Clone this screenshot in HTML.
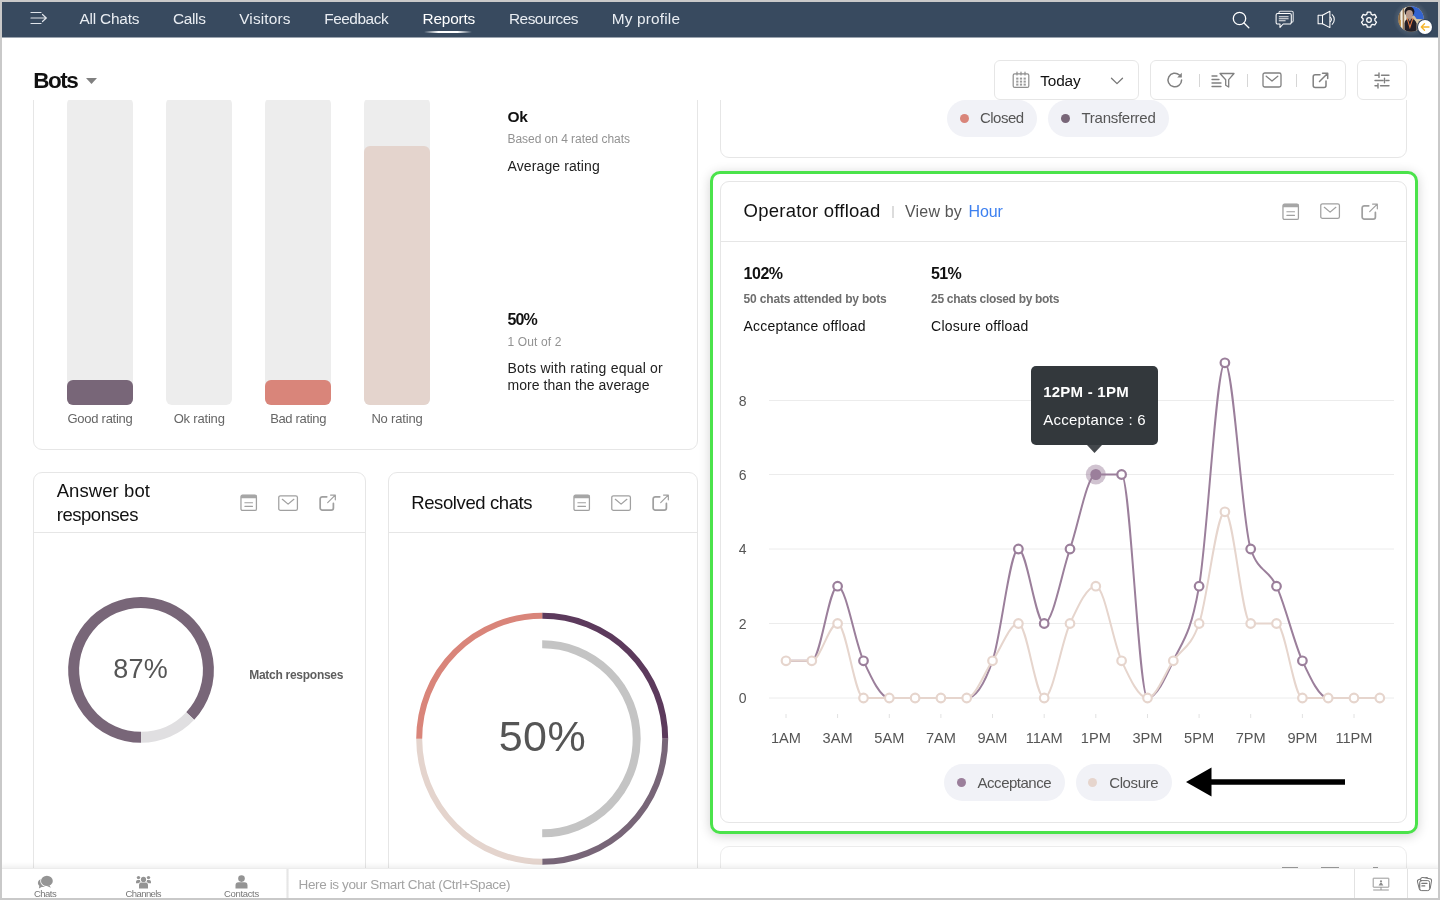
<!DOCTYPE html>
<html lang="en">
<head>
<meta charset="utf-8">
<title>Bots - Reports</title>
<style>
*{box-sizing:border-box;margin:0;padding:0}
html,body{width:1440px;height:900px;overflow:hidden;background:#fff}
body{font-family:"Liberation Sans",sans-serif;color:#111;position:relative}
.abs{position:absolute}
.t{position:absolute;white-space:nowrap;line-height:1}
.c{transform:translateX(-50%)}
svg{position:absolute;overflow:visible}
.ico{fill:none;stroke:#a0a0a0;stroke-width:1.3;stroke-linecap:round;stroke-linejoin:round}
.card{position:absolute;border:1px solid #e6e6e6;border-radius:9px;background:#fff}
.hline{position:absolute;height:1px;background:#e6e6e6}
.pill{position:absolute;height:36px;border-radius:19px;background:#f1f2f7}
.pill i{position:absolute;left:14px;top:13px;width:9px;height:9px;border-radius:50%}
.pill span{position:absolute;left:33px;top:10px;font-size:15px;line-height:1;color:#555;white-space:nowrap}
.bar{position:absolute;width:66px;background:#ededed;border-radius:6px;top:98px;height:307px}
.bar b{position:absolute;left:0;right:0;bottom:0;border-radius:6px}
.nav{font-size:15.5px;color:#e9edf2;top:11px;letter-spacing:-0.35px}
</style>
</head>
<body>
<div id="root" style="position:absolute;left:0;top:0;width:1440px;height:900px;will-change:transform">
<!-- top navigation -->
<div class="abs" style="left:0;top:0;width:1440px;height:37px;background:#384a5f"></div>
<div class="abs" style="left:0;top:37px;width:1440px;height:1px;background:rgba(56,74,95,0.5)"></div>
<svg style="left:30px;top:11px" width="18" height="14" viewBox="0 0 18 14"><g fill="none" stroke="#dfe4ea" stroke-width="1.2" stroke-linecap="round"><path d="M1 1.5h10M1 7h15M1 12.5h10M12.5 3.5L16.3 7l-3.8 3.5"/></g></svg>
<div class="t" style="left:79.50px;top:10px;font-size:15.4px;line-height:17px;color:#e9edf2;letter-spacing:-0.201px">All Chats</div>
<div class="t" style="left:173.00px;top:10px;font-size:15.4px;line-height:17px;color:#e9edf2;letter-spacing:-0.345px">Calls</div>
<div class="t" style="left:239.20px;top:10px;font-size:15.4px;line-height:17px;color:#e9edf2;letter-spacing:0.162px">Visitors</div>
<div class="t" style="left:324.20px;top:10px;font-size:15.4px;line-height:17px;color:#e9edf2;letter-spacing:-0.452px">Feedback</div>
<div class="t" style="left:422.50px;top:10px;font-size:15.4px;line-height:17px;color:#fff;letter-spacing:-0.202px">Reports</div>
<div class="t" style="left:509.00px;top:10px;font-size:15.4px;line-height:17px;color:#e9edf2;letter-spacing:-0.511px">Resources</div>
<div class="t" style="left:611.70px;top:10px;font-size:15.4px;line-height:17px;color:#e9edf2;letter-spacing:0.176px">My profile</div>
<div class="abs" style="left:424px;top:31px;width:48px;height:2px;border-radius:1px;background:linear-gradient(90deg,rgba(255,255,255,0),#fff 30%,#fff 70%,rgba(255,255,255,0))"></div>
<!-- nav right icons -->
<svg style="left:1231px;top:10px" width="20" height="20" viewBox="0 0 20 20"><g fill="none" stroke="#fff" stroke-width="1.3" stroke-linecap="round"><circle cx="8.5" cy="8.5" r="6.2"/><path d="M13 13l4.8 4.8"/></g></svg>
<svg style="left:1274.600px;top:10px" width="20" height="20" viewBox="0 0 20 20"><g fill="none" stroke="#fff" stroke-width="1.05" stroke-linejoin="round" stroke-linecap="round"><path d="M4 3.300V2.600a1.400 1.400 0 0 1 1.400-1.400H16.800a1.400 1.400 0 0 1 1.400 1.400v8.200a1.400 1.400 0 0 1-1.400 1.400h-.600" opacity="0.85"/><path d="M2.600 3.400h12.200a1.500 1.500 0 0 1 1.500 1.500v7.600a1.500 1.500 0 0 1-1.500 1.500H8.200L5 17.400V14H2.600a1.500 1.500 0 0 1-1.500-1.500V4.900a1.500 1.500 0 0 1 1.500-1.500z"/><path d="M4.200 6.800h9M4.200 8.800h9M4.200 10.800h6" opacity="0.9"/></g></svg>
<svg style="left:1316px;top:9px" width="22" height="20" viewBox="0 0 22 20"><g fill="none" stroke="#fff" stroke-width="1.05" stroke-linejoin="round" stroke-linecap="round"><path d="M2.100 6.300h4.400v8.400H2.100z"/><path d="M6.500 6.300L13.900 2.300v16.300L6.500 14.700"/><path d="M14.300 8.400a2.500 2.500 0 0 1 0 4.200M16.200 5.700a6.600 6.600 0 0 1 0 9.600"/></g></svg>
<svg style="left:1359px;top:10px" width="20" height="20" viewBox="0 0 20 20"><g fill="none" stroke="#fff" stroke-width="1.3" stroke-linejoin="round"><circle cx="10" cy="10" r="2.3"/><path d="M8.3 2.2h3.4l.5 2.1 1.5.8 2.1-.7 1.7 2.9-1.6 1.5v1.8l1.6 1.5-1.7 2.9-2.1-.7-1.5.8-.5 2.1H8.3l-.5-2.1-1.5-.8-2.1.7-1.7-2.9 1.6-1.5V8.8L2.5 7.3l1.7-2.9 2.1.7 1.5-.8z"/></g></svg>
<div class="abs" style="left:1392.8px;top:0.500px;width:36px;height:36px;border-radius:50%;background:radial-gradient(circle,rgba(255,255,255,0.15) 40%,rgba(255,255,255,0) 70%)"></div>
<svg style="left:1397.8px;top:5.500px" width="26" height="26" viewBox="0 0 26 26"><defs><clipPath id="avc"><circle cx="13" cy="13" r="12.8"/></clipPath></defs>
<g clip-path="url(#avc)"><rect width="26" height="26" fill="#cdbb9d"/>
<rect x="0" y="0" width="2.500" height="26" fill="#8a6a45"/><rect x="2.500" y="0" width="2.200" height="26" fill="#f1ece2"/><rect x="4.700" y="0" width="1.600" height="26" fill="#9a7c58"/><rect x="6.300" y="0" width="1.800" height="26" fill="#ece4d6"/>
<rect x="1.500" y="14" width="1.500" height="12" fill="#c99a4e"/>
<path d="M12.500 0H26V13.600L19 13.400 16.500 10 13 9z" fill="#3363cf"/>
<path d="M17 13l9 .500V26H17z" fill="#d8c7a4"/>
<ellipse cx="11.500" cy="5.600" rx="4.900" ry="5.200" fill="#1f1a20"/>
<ellipse cx="11.400" cy="8.200" rx="3.500" ry="4.200" fill="#b8998a"/>
<path d="M6.500 26V17.500Q6.800 13.200 11.500 12.200 17.500 12.600 18.600 17.500V26z" fill="#221e26"/>
<path d="M9.100 12.200L11.900 21.500 15 11.800" fill="none" stroke="#df7a45" stroke-width="1.100"/>
<path d="M10 12.300l1.800 3.200 1.800-3.400z" fill="#b8998a"/>
</g></svg>
<div class="abs" style="left:1416.500px;top:19px;width:16.600px;height:16.600px;border-radius:50%;background:#32435a"></div>
<div class="abs" style="left:1417.600px;top:20.400px;width:14px;height:14px;border-radius:50%;background:#fff"></div>
<svg style="left:1419.600px;top:22.400px" width="10" height="10" viewBox="0 0 10 10"><path d="M9 5H1.5M4.5 1.8L1.3 5l3.2 3.2" fill="none" stroke="#f5b52c" stroke-width="1.35" stroke-linecap="round" stroke-linejoin="round"/></svg>
<!-- title + toolbar -->
<div class="t" style="left:33.20px;top:68px;font-size:22.5px;line-height:25px;color:#111;font-weight:bold;letter-spacing:-1.449px">Bots</div>
<svg style="left:86px;top:78px" width="11" height="6" viewBox="0 0 11 6"><path d="M0 0h11L5.5 6z" fill="#808080"/></svg>

<div class="abs" style="left:994px;top:60px;width:145px;height:40px;border:1px solid #e6e6e6;border-radius:6px;background:#fff"></div>
<svg style="left:1012px;top:71px" width="18" height="18" viewBox="0 0 18 18"><g fill="none" stroke="#8e8e8e" stroke-width="1.2" stroke-linecap="round"><rect x="1.2" y="2.8" width="15.6" height="13.6" rx="1.5"/><path d="M5 1v3M9 1v3M13 1v3"/></g><g fill="#9a9a9a"><rect x="4.2" y="6.6" width="2.2" height="2"/><rect x="7.9" y="6.6" width="2.2" height="2"/><rect x="11.6" y="6.6" width="2.2" height="2"/><rect x="4.2" y="9.6" width="2.2" height="2"/><rect x="7.9" y="9.6" width="2.2" height="2"/><rect x="11.6" y="9.6" width="2.2" height="2"/><rect x="4.2" y="12.6" width="2.2" height="2"/><rect x="7.9" y="12.6" width="2.2" height="2"/><rect x="11.6" y="12.6" width="2.2" height="2"/></g></svg>
<div class="t" style="left:1040.30px;top:72px;font-size:15.4px;line-height:17px;color:#111;letter-spacing:-0.177px">Today</div>
<svg style="left:1110px;top:77px" width="14" height="8" viewBox="0 0 14 8"><path d="M1.5 1.2L7 6.6l5.5-5.4" fill="none" stroke="#777" stroke-width="1.3" stroke-linecap="round" stroke-linejoin="round"/></svg>

<div class="abs" style="left:1150px;top:60px;width:196px;height:40px;border:1px solid #e6e6e6;border-radius:6px;background:#fff"></div>
<svg style="left:1166px;top:71px" width="18" height="18" viewBox="0 0 18 18"><path d="M15.6 9a6.8 6.8 0 1 1-2.2-5" fill="none" stroke="#808080" stroke-width="1.5" stroke-linecap="round"/><path d="M15.8 1.8v4.6h-4.6z" fill="#808080"/></svg>
<div class="abs" style="left:1199px;top:74px;width:1px;height:13px;background:#d6d6d6"></div>
<svg style="left:1211px;top:72px" width="24" height="17" viewBox="0 0 24 17"><g fill="none" stroke="#808080" stroke-width="1.3" stroke-linejoin="round" stroke-linecap="round"><path d="M9 1.5h14l-5.3 6.2v7.3l-3-1.8V7.7z"/><path d="M1 4h5M1 7.5h7M1 11h9M1 14.5h9"/></g></svg>
<div class="abs" style="left:1247px;top:74px;width:1px;height:13px;background:#d6d6d6"></div>
<svg style="left:1262px;top:72px" width="20" height="16" viewBox="0 0 20 16"><g fill="none" stroke="#808080" stroke-width="1.3" stroke-linejoin="round" stroke-linecap="round"><rect x="1" y="1" width="18" height="14" rx="1.8"/><path d="M4.2 4.2L10 9l5.8-4.8"/></g></svg>
<div class="abs" style="left:1296px;top:74px;width:1px;height:13px;background:#d6d6d6"></div>
<svg style="left:1312px;top:72px" width="17" height="17" viewBox="0 0 17 17"><g fill="none" stroke="#808080" stroke-width="1.5" stroke-linejoin="round" stroke-linecap="round"><path d="M8 2.8H3.2a2 2 0 0 0-2 2v8.8a2 2 0 0 0 2 2H12a2 2 0 0 0 2-2V9"/><path d="M7.5 9.5L15.5 1.5M10.5 1.2h5.2v5.2"/></g></svg>

<div class="abs" style="left:1357px;top:60px;width:50px;height:40px;border:1px solid #e6e6e6;border-radius:6px;background:#fff"></div>
<svg style="left:1374px;top:72px" width="16" height="17" viewBox="0 0 16 17"><g fill="none" stroke="#808080" stroke-width="1.4" stroke-linecap="round"><path d="M1 3.2h3.5M7.5 3.2H15M1 8.5h8M12 8.5h3M1 13.8h2.5M6.5 13.8H15M5 1v4.4M10.5 6.3v4.4M4 11.6V16"/></g></svg>
<!-- scroll area (clipped below toolbar) -->
<div class="abs" style="left:0;top:100px;width:1440px;height:768px;overflow:hidden"><div class="abs" style="left:0;top:-100px;width:1440px;height:900px">

<!-- rating card -->
<div class="card" style="left:33px;top:20px;width:665px;height:430px"></div>
<div class="bar" style="left:67px"><b style="height:25px;background:#786678"></b></div>
<div class="bar" style="left:166px"></div>
<div class="bar" style="left:265px"><b style="height:25px;background:#d9857a"></b></div>
<div class="bar" style="left:364px"><b style="height:259px;background:#e4d4cd"></b></div>
<div class="t" style="left:67.50px;top:411px;font-size:13px;line-height:15px;color:#666;letter-spacing:-0.267px">Good rating</div>
<div class="t" style="left:173.70px;top:411px;font-size:13px;line-height:15px;color:#666;letter-spacing:-0.194px">Ok rating</div>
<div class="t" style="left:270.15px;top:411px;font-size:13px;line-height:15px;color:#666;letter-spacing:-0.337px">Bad rating</div>
<div class="t" style="left:371.40px;top:411px;font-size:13px;line-height:15px;color:#666;letter-spacing:-0.172px">No rating</div>
<div class="t" style="left:507.50px;top:108px;font-size:15.5px;line-height:17px;color:#111;font-weight:bold;letter-spacing:-0.338px">Ok</div>
<div class="t" style="left:507.50px;top:132px;font-size:12px;line-height:14px;color:#929292;letter-spacing:-0.043px">Based on 4 rated chats</div>
<div class="t" style="left:507.50px;top:158px;font-size:14px;line-height:16px;color:#222;letter-spacing:0.114px">Average rating</div>
<div class="t" style="left:507.50px;top:311px;font-size:16px;line-height:17px;color:#111;font-weight:bold;letter-spacing:-0.908px">50%</div>
<div class="t" style="left:507.50px;top:335px;font-size:12px;line-height:14px;color:#929292;letter-spacing:0.128px">1 Out of 2</div>
<div class="t" style="left:507.50px;top:360px;font-size:14px;line-height:16px;color:#222;letter-spacing:0.212px">Bots with rating equal or</div>
<div class="t" style="left:507.50px;top:377px;font-size:14px;line-height:16px;color:#222;letter-spacing:0.054px">more than the average</div>

<!-- answer bot responses card -->
<div class="card" style="left:33px;top:472px;width:333px;height:440px"></div>
<div class="hline" style="left:34px;top:532px;width:331px"></div>
<div class="t" style="left:56.70px;top:480px;font-size:18.5px;line-height:21px;color:#111;letter-spacing:0.075px">Answer bot</div>
<div class="t" style="left:56.70px;top:504px;font-size:18.5px;line-height:21px;color:#111;letter-spacing:-0.451px">responses</div>
<svg style="left:240px;top:493.6px" width="17.400" height="17.400" viewBox="0 0 18 18"><g class="ico"><rect x="1" y="1.2" width="16" height="15.8" rx="1.6"/><path d="M5 9h8M5 12.800h8" stroke-width="1.100"/></g><rect x="1" y="1" width="16" height="3.4" fill="#a6a6a6"/></svg>
<svg style="left:278px;top:494.5px" width="20.200" height="16.350" viewBox="0 0 21 17"><g class="ico"><rect x="0.8" y="0.8" width="19.4" height="15.2" rx="1.8"/><path d="M4.5 4.5l6 5 6-5"/></g></svg>
<svg style="left:319px;top:493px" width="17.400" height="17.400" viewBox="0 0 18 18" transform="translate(0 0.600)"><g class="ico"><path d="M8 3.300H3.400a2.200 2.200 0 0 0-2.200 2.200v9.300a2.200 2.200 0 0 0 2.200 2.200h9.300a2.200 2.200 0 0 0 2.200-2.200V10.200" stroke-width="1.800"/><path d="M9 9.400L16.800 1.600M12 1.500h4.900v4.900" stroke-width="1.250"/></g></svg>
<svg style="left:61px;top:590px" width="160" height="160" viewBox="0 0 160 160"><path d="M80.1 147.3A67.4 67.4 0 1 1 129.2 126.0" fill="none" stroke="#786678" stroke-width="11"/><path d="M129.2 126.0A67.4 67.4 0 0 1 80.1 147.3" fill="none" stroke="#e0dfe1" stroke-width="11"/></svg>
<div class="t" style="left:113.20px;top:654px;font-size:27px;line-height:30px;color:#555;letter-spacing:0.320px">87%</div>
<div class="t" style="left:249.20px;top:668px;font-size:12px;line-height:14px;color:#5e5e5e;font-weight:bold;letter-spacing:-0.271px">Match responses</div>

<!-- resolved chats card -->
<div class="card" style="left:388px;top:472px;width:310px;height:440px"></div>
<div class="hline" style="left:389px;top:532px;width:308px"></div>
<div class="t" style="left:411.20px;top:492px;font-size:18.5px;line-height:21px;color:#111;letter-spacing:-0.392px">Resolved chats</div>
<svg style="left:572.5px;top:493.6px" width="17.400" height="17.400" viewBox="0 0 18 18"><g class="ico"><rect x="1" y="1.2" width="16" height="15.8" rx="1.6"/><path d="M5 9h8M5 12.800h8" stroke-width="1.100"/></g><rect x="1" y="1" width="16" height="3.4" fill="#a6a6a6"/></svg>
<svg style="left:610.5px;top:494.5px" width="20.200" height="16.350" viewBox="0 0 21 17"><g class="ico"><rect x="0.8" y="0.8" width="19.4" height="15.2" rx="1.8"/><path d="M4.5 4.5l6 5 6-5"/></g></svg>
<svg style="left:651.5px;top:493px" width="17.400" height="17.400" viewBox="0 0 18 18" transform="translate(0 0.600)"><g class="ico"><path d="M8 3.300H3.400a2.200 2.200 0 0 0-2.200 2.200v9.300a2.200 2.200 0 0 0 2.200 2.200h9.300a2.200 2.200 0 0 0 2.200-2.200V10.200" stroke-width="1.800"/><path d="M9 9.400L16.800 1.600M12 1.500h4.900v4.900" stroke-width="1.250"/></g></svg>
<svg style="left:402px;top:598px" width="280" height="280" viewBox="0 0 280 280">
 <g fill="none" stroke-width="6">
  <path d="M140.2 17.8A123 123 0 0 1 263.2 140.8" stroke="#5c3a5c"/>
  <path d="M263.2 140.8A123 123 0 0 1 140.2 263.8" stroke="#786678"/>
  <path d="M140.2 263.8A123 123 0 0 1 17.2 140.8" stroke="#e4d4cd"/>
  <path d="M17.2 140.8A123 123 0 0 1 140.2 17.8" stroke="#d9857a"/>
  <path d="M140.2 46.3A94.5 94.5 0 0 1 140.2 235.3" stroke="#c4c4c4" stroke-width="8"/>
 </g>
</svg>
<div class="t" style="left:498.65px;top:712px;font-size:43px;line-height:48px;color:#555;letter-spacing:0.479px">50%</div>
<!-- right top card (bottom part visible) -->
<div class="card" style="left:720px;top:20px;width:687px;height:138px"></div>
<div class="pill" style="left:947.2px;top:100px;width:89.6px;height:37px"><i style="left:12.8px;top:13.5px;background:#d9857a"></i></div>
<div class="t" style="left:980.00px;top:109px;font-size:15px;line-height:17px;color:#555;letter-spacing:-0.533px">Closed</div>
<div class="pill" style="left:1048.2px;top:100px;width:120.4px;height:37px"><i style="left:12.8px;top:13.5px;background:#786678"></i></div>
<div class="t" style="left:1081.50px;top:109px;font-size:15px;line-height:17px;color:#555;letter-spacing:-0.271px">Transferred</div>

<!-- highlighted operator offload card -->
<div class="abs" style="left:710px;top:171px;width:708px;height:663px;border:3px solid #4be34b;border-radius:10px;background:#fff;box-shadow:0 2px 12px rgba(0,0,0,0.18)"></div>
<div class="card" style="left:720px;top:181px;width:687px;height:642px"></div>
<div class="hline" style="left:721px;top:241px;width:685px"></div>
<div class="t" style="left:743.60px;top:200px;font-size:18.5px;line-height:21px;color:#111;letter-spacing:0.228px">Operator offload</div>
<div class="abs" style="left:892px;top:205.500px;width:1.5px;height:12px;background:#dcdcdc"></div>
<div class="t" style="left:905.00px;top:203px;font-size:16px;line-height:17px;color:#555;letter-spacing:0.181px">View by</div>
<div class="t" style="left:968.60px;top:203px;font-size:16px;line-height:17px;color:#3d80f0;letter-spacing:-0.120px">Hour</div>
<svg style="left:1281.5px;top:202.6px" width="17.400" height="17.400" viewBox="0 0 18 18"><g class="ico"><rect x="1" y="1.2" width="16" height="15.8" rx="1.6"/><path d="M5 9h8M5 12.800h8" stroke-width="1.100"/></g><rect x="1" y="1" width="16" height="3.4" fill="#a6a6a6"/></svg>
<svg style="left:1319.5px;top:203px" width="20.200" height="16.350" viewBox="0 0 21 17"><g class="ico"><rect x="0.8" y="0.8" width="19.4" height="15.2" rx="1.8"/><path d="M4.5 4.5l6 5 6-5"/></g></svg>
<svg style="left:1360.5px;top:202px" width="17.400" height="17.400" viewBox="0 0 18 18" transform="translate(0 0.600)"><g class="ico"><path d="M8 3.300H3.400a2.200 2.200 0 0 0-2.200 2.200v9.300a2.200 2.200 0 0 0 2.200 2.200h9.300a2.200 2.200 0 0 0 2.200-2.200V10.200" stroke-width="1.800"/><path d="M9 9.400L16.800 1.600M12 1.500h4.900v4.900" stroke-width="1.250"/></g></svg>
<div class="t" style="left:743.60px;top:265px;font-size:16px;line-height:17px;color:#111;font-weight:bold;letter-spacing:-0.480px">102%</div>
<div class="t" style="left:743.60px;top:292px;font-size:12px;line-height:14px;color:#6e6e6e;font-weight:bold;letter-spacing:-0.176px">50 chats attended by bots</div>
<div class="t" style="left:743.60px;top:318px;font-size:14px;line-height:16px;color:#111;letter-spacing:0.176px">Acceptance offload</div>
<div class="t" style="left:931.10px;top:265px;font-size:16px;line-height:17px;color:#111;font-weight:bold;letter-spacing:-0.674px">51%</div>
<div class="t" style="left:931.10px;top:292px;font-size:12px;line-height:14px;color:#6e6e6e;font-weight:bold;letter-spacing:-0.323px">25 chats closed by bots</div>
<div class="t" style="left:931.10px;top:318px;font-size:14px;line-height:16px;color:#111;letter-spacing:0.240px">Closure offload</div>
<svg style="left:0;top:0" width="1440" height="900" viewBox="0 0 1440 900" font-family="Liberation Sans, sans-serif">
<line x1="769" x2="1394" y1="698.0" y2="698.0" stroke="#ececec" stroke-width="1"/>
<text x="742.6" y="703.0" font-size="14" fill="#555" text-anchor="middle">0</text>
<line x1="769" x2="1394" y1="623.5" y2="623.5" stroke="#ececec" stroke-width="1"/>
<text x="742.6" y="628.5" font-size="14" fill="#555" text-anchor="middle">2</text>
<line x1="769" x2="1394" y1="549.0" y2="549.0" stroke="#ececec" stroke-width="1"/>
<text x="742.6" y="554.0" font-size="14" fill="#555" text-anchor="middle">4</text>
<line x1="769" x2="1394" y1="474.5" y2="474.5" stroke="#ececec" stroke-width="1"/>
<text x="742.6" y="479.5" font-size="14" fill="#555" text-anchor="middle">6</text>
<line x1="769" x2="1394" y1="400.5" y2="400.5" stroke="#ececec" stroke-width="1"/>
<text x="742.6" y="405.5" font-size="14" fill="#555" text-anchor="middle">8</text>
<line x1="786.0" x2="786.0" y1="714" y2="718" stroke="#e2e2e2" stroke-width="1"/>
<text x="786.0" y="743.3" font-size="14.6" fill="#555" text-anchor="middle">1AM</text>
<line x1="837.6" x2="837.6" y1="714" y2="718" stroke="#e2e2e2" stroke-width="1"/>
<text x="837.6" y="743.3" font-size="14.6" fill="#555" text-anchor="middle">3AM</text>
<line x1="889.3" x2="889.3" y1="714" y2="718" stroke="#e2e2e2" stroke-width="1"/>
<text x="889.3" y="743.3" font-size="14.6" fill="#555" text-anchor="middle">5AM</text>
<line x1="940.9" x2="940.9" y1="714" y2="718" stroke="#e2e2e2" stroke-width="1"/>
<text x="940.9" y="743.3" font-size="14.6" fill="#555" text-anchor="middle">7AM</text>
<line x1="992.5" x2="992.5" y1="714" y2="718" stroke="#e2e2e2" stroke-width="1"/>
<text x="992.5" y="743.3" font-size="14.6" fill="#555" text-anchor="middle">9AM</text>
<line x1="1044.2" x2="1044.2" y1="714" y2="718" stroke="#e2e2e2" stroke-width="1"/>
<text x="1044.2" y="743.3" font-size="14.6" fill="#555" text-anchor="middle">11AM</text>
<line x1="1095.8" x2="1095.8" y1="714" y2="718" stroke="#e2e2e2" stroke-width="1"/>
<text x="1095.8" y="743.3" font-size="14.6" fill="#555" text-anchor="middle">1PM</text>
<line x1="1147.5" x2="1147.5" y1="714" y2="718" stroke="#e2e2e2" stroke-width="1"/>
<text x="1147.5" y="743.3" font-size="14.6" fill="#555" text-anchor="middle">3PM</text>
<line x1="1199.1" x2="1199.1" y1="714" y2="718" stroke="#e2e2e2" stroke-width="1"/>
<text x="1199.1" y="743.3" font-size="14.6" fill="#555" text-anchor="middle">5PM</text>
<line x1="1250.7" x2="1250.7" y1="714" y2="718" stroke="#e2e2e2" stroke-width="1"/>
<text x="1250.7" y="743.3" font-size="14.6" fill="#555" text-anchor="middle">7PM</text>
<line x1="1302.4" x2="1302.4" y1="714" y2="718" stroke="#e2e2e2" stroke-width="1"/>
<text x="1302.4" y="743.3" font-size="14.6" fill="#555" text-anchor="middle">9PM</text>
<line x1="1354.0" x2="1354.0" y1="714" y2="718" stroke="#e2e2e2" stroke-width="1"/>
<text x="1354.0" y="743.3" font-size="14.6" fill="#555" text-anchor="middle">11PM</text>
<path d="M786.0 660.8C794.6 660.8 803.2 660.8 811.8 660.8C820.4 660.8 829.0 586.2 837.6 586.2C846.2 586.2 854.8 642.1 863.5 660.8C872.1 679.4 880.7 698.0 889.3 698.0C897.9 698.0 906.5 698.0 915.1 698.0C923.7 698.0 932.3 698.0 940.9 698.0C949.5 698.0 958.1 698.0 966.7 698.0C975.3 698.0 983.9 685.6 992.5 660.8C1001.2 635.9 1009.8 549.0 1018.4 549.0C1027.0 549.0 1035.6 623.5 1044.2 623.5C1052.8 623.5 1061.4 573.8 1070.0 549.0C1078.6 524.2 1087.2 474.5 1095.8 474.5C1104.4 474.5 1113.0 474.5 1121.6 474.5C1130.2 474.5 1138.8 698.0 1147.5 698.0C1156.1 698.0 1164.7 679.4 1173.3 660.8C1181.9 642.1 1190.5 635.9 1199.1 586.2C1207.7 536.6 1216.3 362.8 1224.9 362.8C1233.5 362.8 1242.1 524.2 1250.7 549.0C1259.3 573.8 1267.9 567.6 1276.5 586.2C1285.2 604.9 1293.8 642.1 1302.4 660.8C1311.0 679.4 1319.6 698.0 1328.2 698.0C1336.8 698.0 1345.4 698.0 1354.0 698.0C1362.6 698.0 1371.2 698.0 1379.8 698.0" fill="none" stroke="#9b7f9b" stroke-width="2" stroke-linejoin="round"/>
<path d="M786.0 660.8C794.6 660.8 803.2 660.8 811.8 660.8C820.4 660.8 829.0 623.5 837.6 623.5C846.2 623.5 854.8 698.0 863.5 698.0C872.1 698.0 880.7 698.0 889.3 698.0C897.9 698.0 906.5 698.0 915.1 698.0C923.7 698.0 932.3 698.0 940.9 698.0C949.5 698.0 958.1 698.0 966.7 698.0C975.3 698.0 983.9 673.2 992.5 660.8C1001.2 648.3 1009.8 623.5 1018.4 623.5C1027.0 623.5 1035.6 698.0 1044.2 698.0C1052.8 698.0 1061.4 642.1 1070.0 623.5C1078.6 604.9 1087.2 586.2 1095.8 586.2C1104.4 586.2 1113.0 642.1 1121.6 660.8C1130.2 679.4 1138.8 698.0 1147.5 698.0C1156.1 698.0 1164.7 673.2 1173.3 660.8C1181.9 648.3 1190.5 648.3 1199.1 623.5C1207.7 598.7 1216.3 511.8 1224.9 511.8C1233.5 511.8 1242.1 623.5 1250.7 623.5C1259.3 623.5 1267.9 623.5 1276.5 623.5C1285.2 623.5 1293.8 698.0 1302.4 698.0C1311.0 698.0 1319.6 698.0 1328.2 698.0C1336.8 698.0 1345.4 698.0 1354.0 698.0C1362.6 698.0 1371.2 698.0 1379.8 698.0" fill="none" stroke="#e6d5cd" stroke-width="2" stroke-linejoin="round"/>
<circle cx="837.6" cy="586.2" r="4.3" fill="#fff" stroke="#9b7f9b" stroke-width="2.2"/>
<circle cx="863.5" cy="660.8" r="4.3" fill="#fff" stroke="#9b7f9b" stroke-width="2.2"/>
<circle cx="1018.4" cy="549.0" r="4.3" fill="#fff" stroke="#9b7f9b" stroke-width="2.2"/>
<circle cx="1044.2" cy="623.5" r="4.3" fill="#fff" stroke="#9b7f9b" stroke-width="2.2"/>
<circle cx="1070.0" cy="549.0" r="4.3" fill="#fff" stroke="#9b7f9b" stroke-width="2.2"/>
<circle cx="1095.8" cy="474.5" r="10" fill="#9b7f9b" fill-opacity="0.47"/>
<circle cx="1095.8" cy="474.5" r="5.5" fill="#9b7f9b"/>
<circle cx="1121.6" cy="474.5" r="4.3" fill="#fff" stroke="#9b7f9b" stroke-width="2.2"/>
<circle cx="1199.1" cy="586.2" r="4.3" fill="#fff" stroke="#9b7f9b" stroke-width="2.2"/>
<circle cx="1224.9" cy="362.8" r="4.3" fill="#fff" stroke="#9b7f9b" stroke-width="2.2"/>
<circle cx="1250.7" cy="549.0" r="4.3" fill="#fff" stroke="#9b7f9b" stroke-width="2.2"/>
<circle cx="1276.5" cy="586.2" r="4.3" fill="#fff" stroke="#9b7f9b" stroke-width="2.2"/>
<circle cx="1302.4" cy="660.8" r="4.3" fill="#fff" stroke="#9b7f9b" stroke-width="2.2"/>
<circle cx="786.0" cy="660.8" r="4.3" fill="#fff" stroke="#e6d5cd" stroke-width="2.2"/>
<circle cx="811.8" cy="660.8" r="4.3" fill="#fff" stroke="#e6d5cd" stroke-width="2.2"/>
<circle cx="837.6" cy="623.5" r="4.3" fill="#fff" stroke="#e6d5cd" stroke-width="2.2"/>
<circle cx="863.5" cy="698.0" r="4.3" fill="#fff" stroke="#e6d5cd" stroke-width="2.2"/>
<circle cx="889.3" cy="698.0" r="4.3" fill="#fff" stroke="#e6d5cd" stroke-width="2.2"/>
<circle cx="915.1" cy="698.0" r="4.3" fill="#fff" stroke="#e6d5cd" stroke-width="2.2"/>
<circle cx="940.9" cy="698.0" r="4.3" fill="#fff" stroke="#e6d5cd" stroke-width="2.2"/>
<circle cx="966.7" cy="698.0" r="4.3" fill="#fff" stroke="#e6d5cd" stroke-width="2.2"/>
<circle cx="992.5" cy="660.8" r="4.3" fill="#fff" stroke="#e6d5cd" stroke-width="2.2"/>
<circle cx="1018.4" cy="623.5" r="4.3" fill="#fff" stroke="#e6d5cd" stroke-width="2.2"/>
<circle cx="1044.2" cy="698.0" r="4.3" fill="#fff" stroke="#e6d5cd" stroke-width="2.2"/>
<circle cx="1070.0" cy="623.5" r="4.3" fill="#fff" stroke="#e6d5cd" stroke-width="2.2"/>
<circle cx="1095.8" cy="586.2" r="4.3" fill="#fff" stroke="#e6d5cd" stroke-width="2.2"/>
<circle cx="1121.6" cy="660.8" r="4.3" fill="#fff" stroke="#e6d5cd" stroke-width="2.2"/>
<circle cx="1147.5" cy="698.0" r="4.3" fill="#fff" stroke="#e6d5cd" stroke-width="2.2"/>
<circle cx="1173.3" cy="660.8" r="4.3" fill="#fff" stroke="#e6d5cd" stroke-width="2.2"/>
<circle cx="1199.1" cy="623.5" r="4.3" fill="#fff" stroke="#e6d5cd" stroke-width="2.2"/>
<circle cx="1224.9" cy="511.8" r="4.3" fill="#fff" stroke="#e6d5cd" stroke-width="2.2"/>
<circle cx="1250.7" cy="623.5" r="4.3" fill="#fff" stroke="#e6d5cd" stroke-width="2.2"/>
<circle cx="1276.5" cy="623.5" r="4.3" fill="#fff" stroke="#e6d5cd" stroke-width="2.2"/>
<circle cx="1302.4" cy="698.0" r="4.3" fill="#fff" stroke="#e6d5cd" stroke-width="2.2"/>
<circle cx="1328.2" cy="698.0" r="4.3" fill="#fff" stroke="#e6d5cd" stroke-width="2.2"/>
<circle cx="1354.0" cy="698.0" r="4.3" fill="#fff" stroke="#e6d5cd" stroke-width="2.2"/>
<circle cx="1379.8" cy="698.0" r="4.3" fill="#fff" stroke="#e6d5cd" stroke-width="2.2"/>
</svg>
<!-- tooltip -->
<div class="abs" style="left:1030.6px;top:366.4px;width:127.8px;height:78.8px;border-radius:5px;background:#33383c"></div>
<svg style="left:1087px;top:444.5px" width="15" height="9" viewBox="0 0 15 9"><path d="M0 0h15L7.5 8z" fill="#43474b"/></svg>
<div class="t" style="left:1043.20px;top:383px;font-size:15px;line-height:17px;color:#fff;font-weight:bold;letter-spacing:0.234px">12PM - 1PM</div>
<div class="t" style="left:1043.20px;top:411px;font-size:15px;line-height:17px;color:#fff;letter-spacing:0.240px">Acceptance : 6</div>
<!-- legend -->
<div class="pill" style="left:944.2px;top:764px;width:121px;height:37.3px"><i style="left:13px;top:14.2px;background:#9b7f9b"></i></div>
<div class="t" style="left:977.60px;top:774px;font-size:15px;line-height:17px;color:#555;letter-spacing:-0.489px">Acceptance</div>
<div class="pill" style="left:1076.2px;top:764px;width:95.8px;height:37.3px"><i style="left:12px;top:14.2px;background:#e6d5cd"></i></div>
<div class="t" style="left:1109.20px;top:774px;font-size:15px;line-height:17px;color:#555;letter-spacing:-0.384px">Closure</div>
<!-- annotation arrow -->
<svg style="left:1186px;top:766px" width="160" height="32" viewBox="0 0 160 32"><path d="M0 16L25.5 1.5V13.3H159V18.7H25.5V30.5z" fill="#000"/></svg>

<!-- next card peeking -->
<div class="card" style="left:720px;top:846px;width:687px;height:120px;border-color:#ececec"></div>
<div class="abs" style="left:1282px;top:867px;width:16px;height:1px;background:#9d9d9d"></div>
<div class="abs" style="left:1321px;top:867px;width:18px;height:1px;background:#9d9d9d"></div>
<div class="abs" style="left:1372.500px;top:867px;width:5.500px;height:1px;background:#9d9d9d"></div>
</div></div>
<!-- bottom bar -->
<div class="abs" style="left:0;top:868px;width:1440px;height:32px;background:#fff;border-top:1px solid #ececec;box-shadow:0 -2px 5px rgba(0,0,0,0.07)"></div>
<svg style="left:37px;top:875px" width="17" height="14" viewBox="0 0 17 14"><g fill="#949494"><ellipse cx="5.600" cy="7.900" rx="4.700" ry="4"/><path d="M2.400 10.400l-.500 3 3.600-1.800z"/><ellipse cx="9.900" cy="5.900" rx="6.700" ry="6" fill="#fff"/><ellipse cx="9.900" cy="5.900" rx="5.900" ry="5.200"/><path d="M12.300 10.200l1.600 2.600-4-1.700z"/></g></svg>
<svg style="left:136px;top:875px" width="15" height="14" viewBox="0 0 15 14"><g fill="#949494"><circle cx="7.5" cy="4.4" r="2.6"/><path d="M3 13.5v-3.3a2.6 2.6 0 0 1 2.6-2.6h3.8A2.6 2.6 0 0 1 12 10.200v3.3z"/><circle cx="2.5" cy="2.6" r="1.7"/><circle cx="12.5" cy="2.6" r="1.7"/><path d="M0 8.200V6.800a1.700 1.700 0 0 1 1.700-1.700H4a4 4 0 0 0 .700 2.200 3.500 3.500 0 0 0-2.300.900zM15 8.200V6.800a1.700 1.700 0 0 0-1.700-1.700H11a4 4 0 0 1-.700 2.200 3.500 3.500 0 0 1 2.300.900z"/></g></svg>
<svg style="left:235px;top:875px" width="13" height="14" viewBox="0 0 13 14"><g fill="#949494"><circle cx="6.500" cy="3.600" r="3.300"/><path d="M0.500 13.500v-3.200a3 3 0 0 1 3-3h6a3 3 0 0 1 3 3v3.200z"/></g></svg>
<div class="t" style="left:34.00px;top:888px;font-size:9.5px;line-height:11px;color:#777;letter-spacing:-0.524px">Chats</div>
<div class="t" style="left:125.60px;top:888px;font-size:9.5px;line-height:11px;color:#777;letter-spacing:-0.593px">Channels</div>
<div class="t" style="left:224.00px;top:888px;font-size:9.5px;line-height:11px;color:#777;letter-spacing:-0.337px">Contacts</div>
<div class="abs" style="left:286px;top:869px;width:3px;height:31px;background:linear-gradient(90deg,#f6f6f6,#e6e6e6,#f6f6f6)"></div>
<div class="t" style="left:298.50px;top:877px;font-size:13.5px;line-height:15px;color:#a3a3a3;letter-spacing:-0.366px">Here is your Smart Chat (Ctrl+Space)</div>
<div class="abs" style="left:1354px;top:869px;width:1px;height:31px;background:#e2e2e2"></div>
<div class="abs" style="left:1407px;top:869px;width:1px;height:31px;background:#e2e2e2"></div>
<svg style="left:1372px;top:877px" width="18" height="14" viewBox="0 0 18 14"><g fill="none" stroke="#8c8c8c" stroke-width="0.9"><rect x="1.200" y="1.200" width="15.600" height="9" rx="0.300"/><path d="M1.200 13h15.600M9 10.200V13"/></g><circle cx="9" cy="4.300" r="1.100" fill="#8c8c8c"/><path d="M6.600 8.600L8.300 5.800h1.400L11.400 8.600z" fill="#8c8c8c"/></svg>
<svg style="left:1416px;top:876px" width="17" height="16" viewBox="0 0 17 16"><g fill="#fff" stroke="#777" stroke-width="1" stroke-linejoin="round" stroke-linecap="round"><rect x="2.200" y="2.400" width="11" height="11" rx="2" transform="rotate(-14 7.700 7.900)"/><rect x="4" y="2" width="11" height="11" rx="2" transform="rotate(10 9.500 7.500)"/><rect x="3.800" y="4.600" width="9.800" height="10" rx="1.800"/><path d="M5.800 7.400h5.200M5.800 9.900h3" fill="none" stroke-width="1.100"/></g></svg>
<!-- window frame -->
<div class="abs" style="left:0;top:0;width:1440px;height:2px;background:#c9c9c9"></div>
<div class="abs" style="left:0;top:898px;width:1440px;height:2px;background:#c9c9c9"></div>
<div class="abs" style="left:0;top:0;width:2px;height:900px;background:#c9c9c9"></div>
<div class="abs" style="left:1438px;top:0;width:2px;height:900px;background:#c9c9c9"></div>
</div>
</body>
</html>
